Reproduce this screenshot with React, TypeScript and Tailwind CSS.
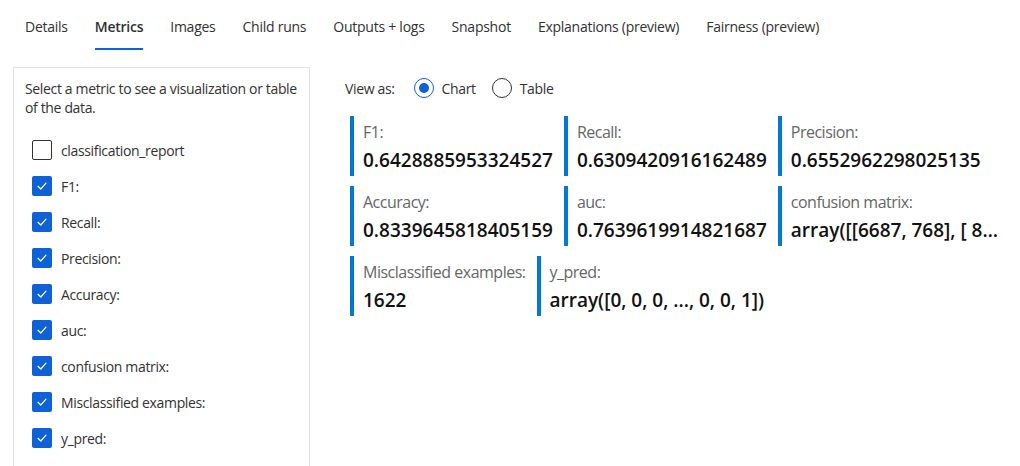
const TABS = [
  "Details",
  "Metrics",
  "Images",
  "Child runs",
  "Outputs + logs",
  "Snapshot",
  "Explanations (preview)",
  "Fairness (preview)",
];

const METRICS = [
  { name: "classification_report", checked: false },
  { name: "F1:", checked: true },
  { name: "Recall:", checked: true },
  { name: "Precision:", checked: true },
  { name: "Accuracy:", checked: true },
  { name: "auc:", checked: true },
  { name: "confusion matrix:", checked: true },
  { name: "Misclassified examples:", checked: true },
  { name: "y_pred:", checked: true },
];

const CARDS = [
  [
    { label: "F1:", value: "0.6428885953324527" },
    { label: "Recall:", value: "0.6309420916162489" },
    { label: "Precision:", value: "0.6552962298025135" },
  ],
  [
    { label: "Accuracy:", value: "0.8339645818405159" },
    { label: "auc:", value: "0.7639619914821687" },
    { label: "confusion matrix:", value: "array([[6687, 768], [ 872, 1483]])" },
  ],
  [
    { label: "Misclassified examples:", value: "1622" },
    { label: "y_pred:", value: "array([0, 0, 0, ..., 0, 0, 1])" },
  ],
];

export default function App() {
  return (
    <div className="w-[1020px] h-[466px] overflow-hidden bg-white text-[#323130] font-['Segoe_UI','Open_Sans',sans-serif]">
      <nav className="flex gap-[27px] pl-[25px] h-[50px] items-stretch text-[14px] tracking-[-0.25px]">
        {TABS.map((tab) => (
          <div
            key={tab}
            className={
              tab === "Metrics"
                ? "flex items-center font-semibold border-b-2 border-[#0f62d6] pt-[5px]"
                : "flex items-center border-b-2 border-transparent pt-[5px]"
            }
          >
            {tab}
          </div>
        ))}
      </nav>

      <div className="flex mt-[17px]">
        <aside className="ml-[13px] w-[297px] h-[420px] border border-[#e3e3e3] border-b-0 px-[11px] pt-[11px] text-[14px] tracking-[-0.35px]">
          <p className="leading-[19px]">
            Select a metric to see a visualization or table of the data.
          </p>
          <ul className="mt-[23px] pl-[7px] flex flex-col gap-[16px]">
            {METRICS.map((m) => (
              <MetricCheck key={m.name} name={m.name} checked={m.checked} />
            ))}
          </ul>
        </aside>

        <section className="ml-[35px] pr-[10px] flex-1 min-w-0">
          <div className="flex items-center h-[40px] mt-[1px] text-[14px] tracking-[-0.35px]">
            <span>View as:</span>
            <Radio label="Chart" selected className="ml-[19px]" />
            <Radio label="Table" className="ml-[16px]" />
          </div>

          <div className="ml-[5px] mt-[8px] flex flex-col gap-[10px]">
            {CARDS.map((row, i) => (
              <div key={i} className="flex gap-[8px] min-w-0">
                {row.map((c, j) => (
                  <MetricCard key={c.label} label={c.label} value={c.value} shrink={j === row.length - 1} />
                ))}
              </div>
            ))}
          </div>
        </section>
      </div>
    </div>
  );
}

function MetricCheck({ name, checked }: { name: string; checked: boolean }) {
  return (
    <li className="flex items-center gap-[9px] h-[20px]">
      {checked ? (
        <span className="w-[20px] h-[20px] shrink-0 rounded-[2px] bg-[#0f62d6] flex items-center justify-center">
          <svg width="12" height="12" viewBox="0 0 12 12" fill="none">
            <path d="M2 6.3 4.8 9 10 3.2" stroke="white" strokeWidth="1.2" strokeLinecap="round" strokeLinejoin="round" />
          </svg>
        </span>
      ) : (
        <span className="w-[20px] h-[20px] shrink-0 rounded-[2px] border border-[#323130]" />
      )}
      <span>{name}</span>
    </li>
  );
}

function Radio({ label, selected, className }: { label: string; selected?: boolean; className?: string }) {
  return (
    <span className={"flex items-center gap-[8px] " + (className ?? "")}>
      <span
        className={
          selected
            ? "w-[20px] h-[20px] rounded-full border border-[#0f62d6] flex items-center justify-center"
            : "w-[20px] h-[20px] rounded-full border border-[#323130]"
        }
      >
        {selected && <span className="w-[10px] h-[10px] rounded-full bg-[#0f62d6]" />}
      </span>
      <span>{label}</span>
    </span>
  );
}

function MetricCard({ label, value, shrink }: { label: string; value: string; shrink?: boolean }) {
  return (
    <div
      className={
        shrink
          ? "border-l-4 border-[#0078d4] pl-[9px] pr-[3px] pt-[5px] h-[60px] min-w-0 flex flex-col"
          : "border-l-4 border-[#0078d4] pl-[9px] pr-[3px] pt-[5px] h-[60px] shrink-0 flex flex-col"
      }
    >
      <div className="text-[16px] leading-[22px] tracking-[-0.5px] text-[#666] whitespace-nowrap">{label}</div>
      <div className="mt-[4px] text-[19px] leading-[26px] font-semibold text-[#111] whitespace-nowrap overflow-hidden text-ellipsis">
        {value}
      </div>
    </div>
  );
}
